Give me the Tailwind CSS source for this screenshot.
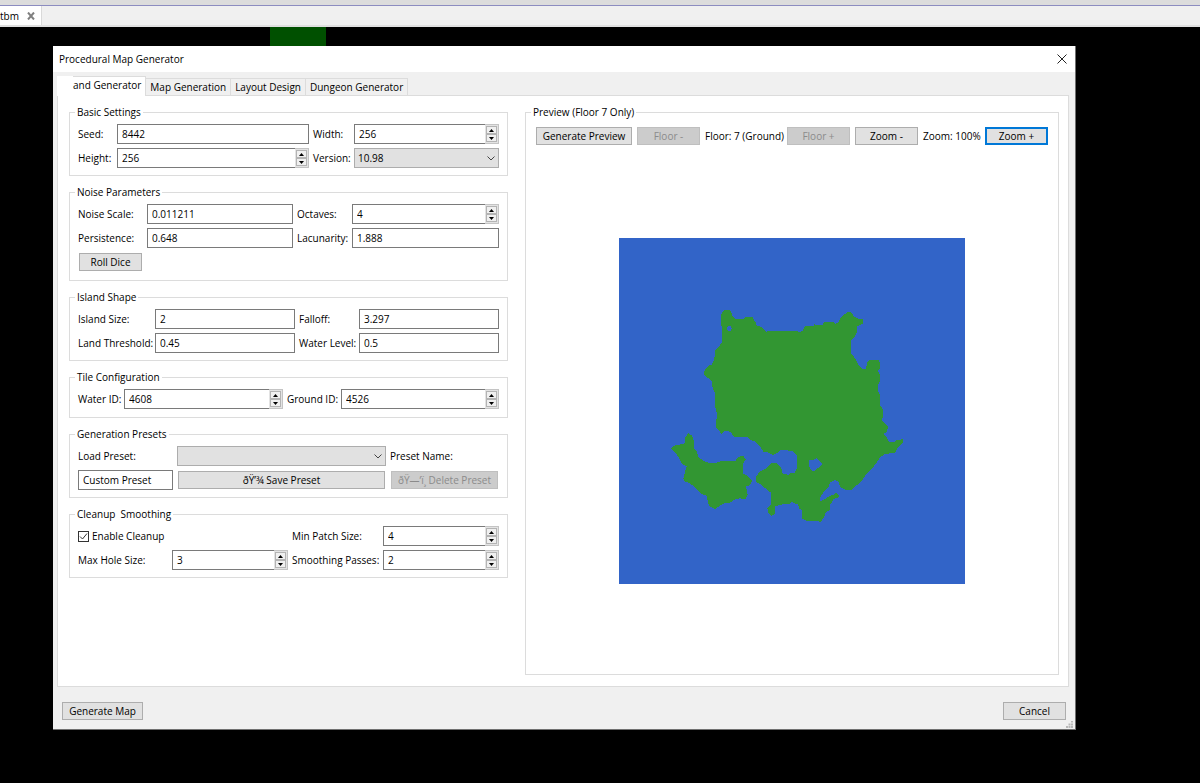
<!DOCTYPE html>
<html lang="en">
<head>
  <meta charset="UTF-8" />
  <meta name="viewport" content="width=device-width, initial-scale=1.0"/>
  <title>Procedural Map Generator</title>
  <script src="https://cdn.jsdelivr.net/npm/@tailwindcss/browser@4"></script>
</head>
<body class="bg-black text-black text-[10px] leading-4 font-['Open_Sans','Noto_Sans',sans-serif] min-h-screen flex flex-col">

  <!-- Editor tab strip -->
  <header>
    <div class="h-[5px] bg-[#dcdcdc]"></div>
    <div class="flex h-[22px] bg-[#f0f0f0] border-t border-[#8c8cc0] border-b-2 border-b-[#e0e0e0]">
      <div class="flex items-center gap-[6px] bg-white border-r border-[#d9d9d9] pr-1">
        <span>tbm</span>
        <button aria-label="Close file" class="w-3 h-4 flex items-center justify-center">
          <svg class="w-2 h-2" viewBox="0 0 8 8" stroke="#808080" stroke-width="2"><path d="M1 0.5L7 7.5M7 0.5L1 7.5"/></svg>
        </button>
      </div>
    </div>
  </header>

  <!-- Map canvas behind the dialog -->
  <div class="h-[19px] flex">
    <div class="ml-[270px] w-14 bg-[#005000]"></div>
  </div>

  <!-- Dialog -->
  <main role="dialog" aria-labelledby="dialog-title" class="relative flex-1 flex flex-col ml-[53px] mr-[124px] mb-[53px] bg-[#f0f0f0] border-r border-b border-[#707070]">
    <div class="h-[26px] bg-white flex items-center justify-between pl-[6px] pr-2">
      <h1 id="dialog-title">Procedural Map Generator</h1>
      <button aria-label="Close" class="w-[10px] h-[10px]">
        <svg class="w-[10px] h-[10px]" viewBox="0 0 10 10" stroke="#222" stroke-width="1"><path d="M0.5 0.5L9.5 9.5M9.5 0.5L0.5 9.5"/></svg>
      </button>
    </div>

    <!-- Tabs -->
    <div role="tablist" class="flex items-end pl-1 pt-1 relative">
      <button role="tab" aria-selected="true" class="flex h-5 -mb-px bg-white border-r border-[#dcdcdc] relative">
        <span class="w-4 h-full bg-white"></span>
        <span class="h-full border-t border-[#dcdcdc] pr-1">and Generator</span>
      </button>
      <button role="tab" class="h-[17px] border-t border-r border-[#dcdcdc] px-1">Map Generation</button>
      <button role="tab" class="h-[17px] border-t border-r border-[#dcdcdc] px-1">Layout Design</button>
      <button role="tab" class="h-[17px] border-t border-r border-[#dcdcdc] px-1">Dungeon Generator</button>
    </div>

    <div role="tabpanel" class="flex-1 mx-1 mr-[6px] bg-white border border-[#dcdcdc] grid grid-cols-[439fr_534fr] gap-x-[17px] pl-[11px] pr-[9px] pt-2 pb-[11px]">

      <!-- Settings column -->
      <form class="flex flex-col gap-2 min-w-0" onsubmit="return false">

        <fieldset class="border border-[#dcdcdc] px-2 pb-[7px] min-w-0">
          <legend class="px-[2px] -ml-[3px]">Basic Settings</legend>
          <div class="grid grid-cols-[35px_192fr_37px_145fr] gap-1 pt-1 items-center whitespace-nowrap">
            <label for="seed">Seed:</label>
            <input id="seed" type="text" value="8442" class="w-full min-w-0 h-5 border border-[#7a7a7a] px-1"/>
            <label for="width">Width:</label>
            <div class="flex h-5 min-w-0">
              <input id="width" type="number" value="256" class="flex-1 min-w-0 border border-r-0 border-[#7a7a7a] px-1 [appearance:textfield]"/>
              <div class="w-[14px] p-px flex flex-col bg-[#e3e3e3] border-y border-r border-[#c4c4c4]">
                <button onclick="step(this, 1)" aria-label="Increase" class="flex-1 flex items-center justify-center bg-[#f0f0f0] border border-[#b4b4b4]"><svg class="w-[5px] h-[3px]" viewBox="0 0 5 3"><path d="M0 3L2.5 0L5 3z"/></svg></button>
                <button onclick="step(this, -1)" aria-label="Decrease" class="flex-1 flex items-center justify-center bg-[#f0f0f0] border border-[#b4b4b4]"><svg class="w-[5px] h-[3px]" viewBox="0 0 5 3"><path d="M0 0L2.5 3L5 0z"/></svg></button>
              </div>
            </div>
            <label for="height">Height:</label>
            <div class="flex h-5 min-w-0">
              <input id="height" type="number" value="256" class="flex-1 min-w-0 border border-r-0 border-[#7a7a7a] px-1 [appearance:textfield]"/>
              <div class="w-[14px] p-px flex flex-col bg-[#e3e3e3] border-y border-r border-[#c4c4c4]">
                <button onclick="step(this, 1)" aria-label="Increase" class="flex-1 flex items-center justify-center bg-[#f0f0f0] border border-[#b4b4b4]"><svg class="w-[5px] h-[3px]" viewBox="0 0 5 3"><path d="M0 3L2.5 0L5 3z"/></svg></button>
                <button onclick="step(this, -1)" aria-label="Decrease" class="flex-1 flex items-center justify-center bg-[#f0f0f0] border border-[#b4b4b4]"><svg class="w-[5px] h-[3px]" viewBox="0 0 5 3"><path d="M0 0L2.5 3L5 0z"/></svg></button>
              </div>
            </div>
            <label for="version">Version:</label>
            <div class="relative h-5 min-w-0">
              <select id="version" class="appearance-none w-full h-5 bg-[#e1e1e1] border border-[#adadad] pl-[3px] pr-4"><option>10.98</option></select>
              <svg class="absolute right-1 top-2 w-2 h-[5px] pointer-events-none" viewBox="0 0 8 5" fill="none" stroke="#444"><path d="M0.5 0.5L4 4L7.5 0.5"/></svg>
            </div>
          </div>
        </fieldset>

        <fieldset class="border border-[#dcdcdc] px-2 pb-2 min-w-0">
          <legend class="px-[2px] -ml-[3px]">Noise Parameters</legend>
          <div class="grid grid-cols-[65px_146fr_51px_147fr] gap-1 pt-1 items-center whitespace-nowrap">
            <label for="noise-scale">Noise Scale:</label>
            <input id="noise-scale" type="text" value="0.011211" class="w-full min-w-0 h-5 border border-[#7a7a7a] px-1"/>
            <label for="octaves">Octaves:</label>
            <div class="flex h-5 min-w-0">
              <input id="octaves" type="number" value="4" class="flex-1 min-w-0 border border-r-0 border-[#7a7a7a] px-1 [appearance:textfield]"/>
              <div class="w-[14px] p-px flex flex-col bg-[#e3e3e3] border-y border-r border-[#c4c4c4]">
                <button onclick="step(this, 1)" aria-label="Increase" class="flex-1 flex items-center justify-center bg-[#f0f0f0] border border-[#b4b4b4]"><svg class="w-[5px] h-[3px]" viewBox="0 0 5 3"><path d="M0 3L2.5 0L5 3z"/></svg></button>
                <button onclick="step(this, -1)" aria-label="Decrease" class="flex-1 flex items-center justify-center bg-[#f0f0f0] border border-[#b4b4b4]"><svg class="w-[5px] h-[3px]" viewBox="0 0 5 3"><path d="M0 0L2.5 3L5 0z"/></svg></button>
              </div>
            </div>
            <label for="persistence">Persistence:</label>
            <input id="persistence" type="text" value="0.648" class="w-full min-w-0 h-5 border border-[#7a7a7a] px-1"/>
            <label for="lacunarity">Lacunarity:</label>
            <input id="lacunarity" type="text" value="1.888" class="w-full min-w-0 h-5 border border-[#7a7a7a] px-1"/>
          </div>
          <div class="pt-1">
            <button onclick="rollDice()" class="block m-px h-[18px] w-[63px] leading-4 bg-[#e1e1e1] border border-[#adadad]">Roll Dice</button>
          </div>
        </fieldset>

        <fieldset class="border border-[#dcdcdc] px-2 pb-[7px] min-w-0">
          <legend class="px-[2px] -ml-[3px]">Island Shape</legend>
          <div class="grid grid-cols-[73px_140fr_56px_140fr] gap-1 pt-1 items-center whitespace-nowrap">
            <label for="island-size">Island Size:</label>
            <input id="island-size" type="text" value="2" class="w-full min-w-0 h-5 border border-[#7a7a7a] px-1"/>
            <label for="falloff">Falloff:</label>
            <input id="falloff" type="text" value="3.297" class="w-full min-w-0 h-5 border border-[#7a7a7a] px-1"/>
            <label for="threshold">Land Threshold:</label>
            <input id="threshold" type="text" value="0.45" class="w-full min-w-0 h-5 border border-[#7a7a7a] px-1"/>
            <label for="water-level">Water Level:</label>
            <input id="water-level" type="text" value="0.5" class="w-full min-w-0 h-5 border border-[#7a7a7a] px-1"/>
          </div>
        </fieldset>

        <fieldset class="border border-[#dcdcdc] px-2 pb-2 min-w-0">
          <legend class="px-[2px] -ml-[3px]">Tile Configuration</legend>
          <div class="grid grid-cols-[42px_159fr_50px_158fr] gap-1 pt-1 items-center whitespace-nowrap">
            <label for="water-id">Water ID:</label>
            <div class="flex h-5 min-w-0">
              <input id="water-id" type="number" value="4608" class="flex-1 min-w-0 border border-r-0 border-[#7a7a7a] px-1 [appearance:textfield]"/>
              <div class="w-[14px] p-px flex flex-col bg-[#e3e3e3] border-y border-r border-[#c4c4c4]">
                <button onclick="step(this, 1)" aria-label="Increase" class="flex-1 flex items-center justify-center bg-[#f0f0f0] border border-[#b4b4b4]"><svg class="w-[5px] h-[3px]" viewBox="0 0 5 3"><path d="M0 3L2.5 0L5 3z"/></svg></button>
                <button onclick="step(this, -1)" aria-label="Decrease" class="flex-1 flex items-center justify-center bg-[#f0f0f0] border border-[#b4b4b4]"><svg class="w-[5px] h-[3px]" viewBox="0 0 5 3"><path d="M0 0L2.5 3L5 0z"/></svg></button>
              </div>
            </div>
            <label for="ground-id">Ground ID:</label>
            <div class="flex h-5 min-w-0">
              <input id="ground-id" type="number" value="4526" class="flex-1 min-w-0 border border-r-0 border-[#7a7a7a] px-1 [appearance:textfield]"/>
              <div class="w-[14px] p-px flex flex-col bg-[#e3e3e3] border-y border-r border-[#c4c4c4]">
                <button onclick="step(this, 1)" aria-label="Increase" class="flex-1 flex items-center justify-center bg-[#f0f0f0] border border-[#b4b4b4]"><svg class="w-[5px] h-[3px]" viewBox="0 0 5 3"><path d="M0 3L2.5 0L5 3z"/></svg></button>
                <button onclick="step(this, -1)" aria-label="Decrease" class="flex-1 flex items-center justify-center bg-[#f0f0f0] border border-[#b4b4b4]"><svg class="w-[5px] h-[3px]" viewBox="0 0 5 3"><path d="M0 0L2.5 3L5 0z"/></svg></button>
              </div>
            </div>
          </div>
        </fieldset>

        <fieldset class="border border-[#dcdcdc] px-2 pb-[7px] min-w-0">
          <legend class="px-[2px] -ml-[3px]">Generation Presets</legend>
          <div class="grid grid-cols-[95fr_209fr_109fr] gap-1 pt-1 items-center whitespace-nowrap">
            <label for="load-preset">Load Preset:</label>
            <div class="relative h-5 min-w-0">
              <select id="load-preset" class="appearance-none w-full h-5 bg-[#e1e1e1] border border-[#adadad] pl-[3px] pr-4"></select>
              <svg class="absolute right-1 top-2 w-2 h-[5px] pointer-events-none" viewBox="0 0 8 5" fill="none" stroke="#444"><path d="M0.5 0.5L4 4L7.5 0.5"/></svg>
            </div>
            <label for="preset-name">Preset Name:</label>
            <input id="preset-name" type="text" value="Custom Preset" class="w-full min-w-0 h-5 border border-[#7a7a7a] px-1"/>
            <button class="m-px h-[18px] leading-4 bg-[#e1e1e1] border border-[#adadad]">ðŸ’¾ Save Preset</button>
            <button disabled class="m-px h-[18px] leading-4 bg-[#cccccc] border border-[#bfbfbf] text-[#8b8b8b]">ðŸ—‘ï¸ Delete Preset</button>
          </div>
        </fieldset>

        <fieldset class="border border-[#dcdcdc] px-2 pb-[7px] min-w-0">
          <legend class="px-[2px] -ml-[3px] whitespace-pre">Cleanup  Smoothing</legend>
          <div class="grid grid-cols-[90px_116fr_87px_116fr] gap-1 pt-1 items-center whitespace-nowrap">
            <div class="col-span-2 flex items-center gap-[3px]">
              <span class="relative w-[11px] h-[11px]">
                <input id="cleanup" type="checkbox" checked class="peer appearance-none block w-[11px] h-[11px] bg-white border border-[#333]"/>
                <svg class="absolute inset-0 w-[11px] h-[11px] pointer-events-none hidden peer-checked:block" viewBox="0 0 11 11" fill="none" stroke="#333"><path d="M2 5.5L4.5 8L9 2.5"/></svg>
              </span>
              <label for="cleanup">Enable Cleanup</label>
            </div>
            <label for="min-patch">Min Patch Size:</label>
            <div class="flex h-5 min-w-0">
              <input id="min-patch" type="number" value="4" class="flex-1 min-w-0 border border-r-0 border-[#7a7a7a] px-1 [appearance:textfield]"/>
              <div class="w-[14px] p-px flex flex-col bg-[#e3e3e3] border-y border-r border-[#c4c4c4]">
                <button onclick="step(this, 1)" aria-label="Increase" class="flex-1 flex items-center justify-center bg-[#f0f0f0] border border-[#b4b4b4]"><svg class="w-[5px] h-[3px]" viewBox="0 0 5 3"><path d="M0 3L2.5 0L5 3z"/></svg></button>
                <button onclick="step(this, -1)" aria-label="Decrease" class="flex-1 flex items-center justify-center bg-[#f0f0f0] border border-[#b4b4b4]"><svg class="w-[5px] h-[3px]" viewBox="0 0 5 3"><path d="M0 0L2.5 3L5 0z"/></svg></button>
              </div>
            </div>
            <label for="max-hole">Max Hole Size:</label>
            <div class="flex h-5 min-w-0">
              <input id="max-hole" type="number" value="3" class="flex-1 min-w-0 border border-r-0 border-[#7a7a7a] px-1 [appearance:textfield]"/>
              <div class="w-[14px] p-px flex flex-col bg-[#e3e3e3] border-y border-r border-[#c4c4c4]">
                <button onclick="step(this, 1)" aria-label="Increase" class="flex-1 flex items-center justify-center bg-[#f0f0f0] border border-[#b4b4b4]"><svg class="w-[5px] h-[3px]" viewBox="0 0 5 3"><path d="M0 3L2.5 0L5 3z"/></svg></button>
                <button onclick="step(this, -1)" aria-label="Decrease" class="flex-1 flex items-center justify-center bg-[#f0f0f0] border border-[#b4b4b4]"><svg class="w-[5px] h-[3px]" viewBox="0 0 5 3"><path d="M0 0L2.5 3L5 0z"/></svg></button>
              </div>
            </div>
            <label for="passes">Smoothing Passes:</label>
            <div class="flex h-5 min-w-0">
              <input id="passes" type="number" value="2" class="flex-1 min-w-0 border border-r-0 border-[#7a7a7a] px-1 [appearance:textfield]"/>
              <div class="w-[14px] p-px flex flex-col bg-[#e3e3e3] border-y border-r border-[#c4c4c4]">
                <button onclick="step(this, 1)" aria-label="Increase" class="flex-1 flex items-center justify-center bg-[#f0f0f0] border border-[#b4b4b4]"><svg class="w-[5px] h-[3px]" viewBox="0 0 5 3"><path d="M0 3L2.5 0L5 3z"/></svg></button>
                <button onclick="step(this, -1)" aria-label="Decrease" class="flex-1 flex items-center justify-center bg-[#f0f0f0] border border-[#b4b4b4]"><svg class="w-[5px] h-[3px]" viewBox="0 0 5 3"><path d="M0 0L2.5 3L5 0z"/></svg></button>
              </div>
            </div>
          </div>
        </fieldset>
      </form>

      <!-- Preview -->
      <fieldset class="border border-[#dcdcdc] px-2 min-w-0 flex flex-col">
        <legend class="px-[2px] -ml-[3px]">Preview (Floor 7 Only)</legend>
        <div class="flex justify-center items-center gap-[5px] pt-[7px] whitespace-nowrap">
          <button class="h-[18px] w-24 leading-4 bg-[#e1e1e1] border border-[#adadad]">Generate Preview</button>
          <button disabled class="h-[18px] w-[63px] leading-4 bg-[#cccccc] border border-[#bfbfbf] text-[#8b8b8b]">Floor -</button>
          <span class="w-[77px]">Floor: 7 (Ground)</span>
          <button disabled class="h-[18px] w-[63px] leading-4 bg-[#cccccc] border border-[#bfbfbf] text-[#8b8b8b]">Floor +</button>
          <button class="h-[18px] w-[63px] leading-4 bg-[#e1e1e1] border border-[#adadad]">Zoom -</button>
          <span class="w-[57px]">Zoom: 100%</span>
          <button class="h-[18px] w-[63px] leading-[14px] bg-[#e1e1e1] border-2 border-[#0078d7]">Zoom +</button>
        </div>
        <div class="flex-1 flex items-center justify-center pt-[2px]">
          <svg class="w-[346px] h-[346px] bg-[#3264c8]" viewBox="-123 -186 1038 1038" fill="#329632" fill-rule="evenodd" shape-rendering="crispEdges" role="img" aria-label="Island preview">
            <!-- main island, with its two lakes -->
            <path d="M182 50L185 40L195 30H208L216 40L218 50L228 57H250L254 52H278L286 66L290 76L305 82L318 95L330 93H410L420 96L428 93L435 78H460L463 72L472 76H487L492 66H520L526 71L535 68L542 52L555 42L565 36L574 38L582 50L598 57L610 58V70L600 75L590 80L591 98L582 112L573 122L574 160L585 175L595 195L608 208H618L621 188L628 179L655 180L660 188L659 205L654 212L660 225V245L654 255L655 275L661 285V316L669 330V345L666 362L676 372L683 380L682 395L670 402L680 410L686 424L700 427L710 420L728 418L731 424L720 436L712 446L705 458L675 462L660 472L648 490L635 508L618 524L603 545L585 560L575 569H555L540 560L535 545L523 540L510 548L505 562L490 578L481 592V603L490 600L505 590L520 584L528 578L536 584V592L520 597L515 610L510 615V630L498 637L490 655L480 668L475 662L440 663L426 655L425 632L418 625L414 612L402 610L396 605L388 612L358 614L345 620V640L335 648L325 640L322 625L333 612V578L320 568L300 552L288 545L289 528L300 515L320 504L332 490H350L360 500L365 507L368 520L385 525L390 520L405 518L410 505V465L400 455L378 450L362 450L350 460L338 465L325 458L310 455L300 438L285 425L270 420L262 410L225 412L210 395L193 392L190 398L183 404L178 392L167 382V370L172 345L168 330L165 320V280L158 265L155 242L145 235L130 222L135 210L145 197L155 195L163 178L165 150L180 135L187 125V98L184 75Z
              M202 80L210 77L215 84L213 92L204 92L201 85Z
              M448 480L465 478L468 474L476 480L487 493L475 503L465 512L455 512L447 500Z"/>
            <!-- western island -->
            <path d="M76 412L85 400L97 408L101 420V445L110 452L115 470L130 483L150 489L170 488L180 484H225L235 470L250 468L257 478L250 490L249 520L262 528L277 543L270 555L258 560L263 585L255 598L240 595L225 598L210 608L190 611L175 620L165 627L150 620L143 608L142 588L125 582L105 562L90 550L75 545L70 535L76 512L80 498L66 492L55 470L45 458L33 445L45 436L70 432L76 425Z"/>
          </svg>
        </div>
      </fieldset>
    </div>

    <!-- Dialog buttons -->
    <div class="flex justify-between pt-[15px] pb-[9px] pl-[9px] pr-[9px]">
      <button class="h-[18px] w-[81px] leading-4 bg-[#e1e1e1] border border-[#adadad]">Generate Map</button>
      <button class="h-[18px] w-[63px] leading-4 bg-[#e1e1e1] border border-[#adadad]">Cancel</button>
    </div>
    <svg class="absolute right-[2px] bottom-px w-[7px] h-[7px]" viewBox="0 0 7 7" fill="#b8b8b8"><path d="M5 0h2v1.500h-2zM2.500 2.500h2v2h-2zM5 2.500h2v2h-2zM0 5h2v2h-2zM2.500 5h2v2h-2zM5 5h2v2h-2z"/></svg>
  </main>

<script>
function step(btn, dir) {
  const input = btn.parentElement.previousElementSibling;
  input.value = Math.max(0, Number(input.value) + dir);
}

function rollDice() {
  document.getElementById("seed").value = Math.floor(Math.random() * 10000);
  document.getElementById("noise-scale").value = (0.005 + Math.random() * 0.02).toFixed(6);
  document.getElementById("persistence").value = (0.3 + Math.random() * 0.5).toFixed(3);
  document.getElementById("lacunarity").value = (1.5 + Math.random()).toFixed(3);
}
</script>
</body>
</html>
